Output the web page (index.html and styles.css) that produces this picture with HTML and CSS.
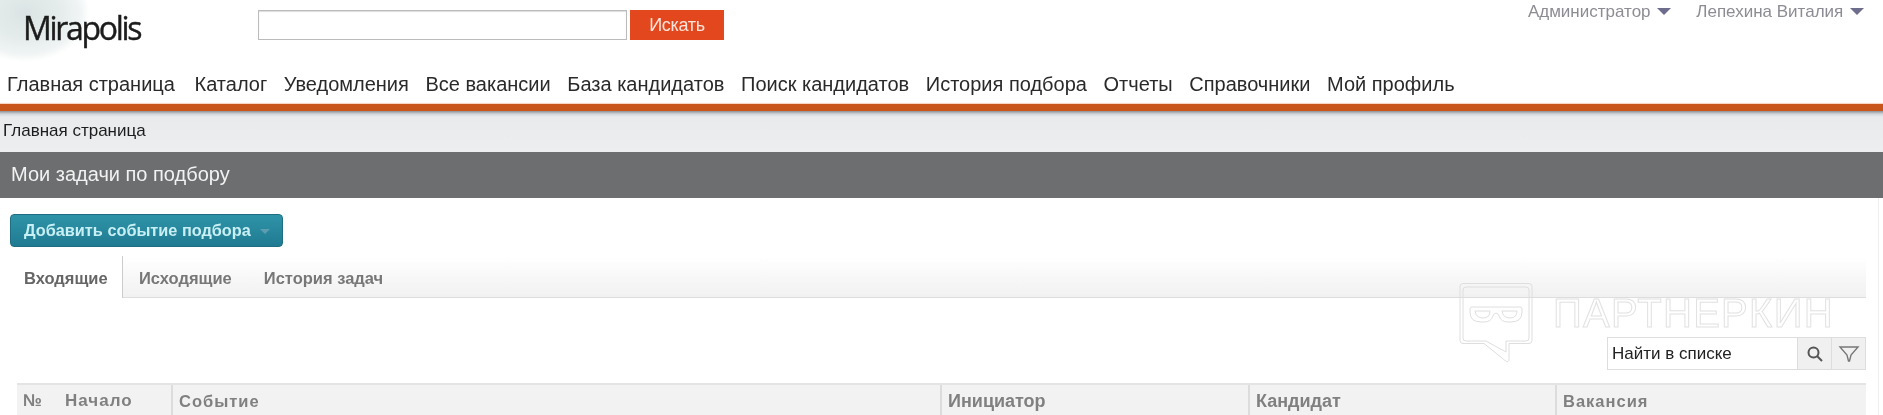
FILE: index.html
```html
<!DOCTYPE html>
<html lang="en">
<head>
    <meta charset="UTF-8">
    <title>Mirapolis</title>
    <link rel="stylesheet" href="styles.css">
</head>
<body>
    <div class="page">
        <header class="top-bar">
            <div class="logo"><span class="logo-blob"></span><span class="logo-text">Mirapolis</span></div>
            <div class="site-search">
                <input class="site-search-input" type="text">
                <button class="site-search-btn">Искать</button>
            </div>
            <div class="user-menu">
                <span class="user-item">Администратор <i class="caret"></i></span>
                <span class="user-item">Лепехина Виталия <i class="caret"></i></span>
            </div>
        </header>

        <nav class="main-nav">
            <a class="nav-home">Главная страница</a>
            <a>Каталог</a>
            <a>Уведомления</a>
            <a>Все вакансии</a>
            <a>База кандидатов</a>
            <a>Поиск кандидатов</a>
            <a>История подбора</a>
            <a>Отчеты</a>
            <a>Справочники</a>
            <a>Мой профиль</a>
        </nav>
        <div class="nav-line"></div>

        <div class="breadcrumb">Главная страница</div>
        <h1 class="page-title">Мои задачи по подбору</h1>

        <div class="content">
            <button class="add-btn">Добавить событие подбора <i class="add-caret"></i></button>

            <div class="tabs">
                <span class="tab tab-active">Входящие</span>
                <span class="tab">Исходящие</span>
                <span class="tab">История задач</span>
            </div>

            <div class="list-tools">
                <div class="list-search">
                    <span class="list-search-text">Найти в списке</span>
                    <span class="tool-btn">
                        <svg width="18" height="18" viewBox="0 0 18 18" fill="none" stroke="#555" stroke-width="2"><circle cx="7.5" cy="7.5" r="5"/><path d="M11 11l5 5"/></svg>
                    </span>
                    <span class="tool-btn">
                        <svg width="22" height="20" viewBox="0 0 22 20" fill="none" stroke="#777" stroke-width="1.4"><path d="M2 3h18l-7 8-1.5 6h-1L9 11z"/></svg>
                    </span>
                </div>
            </div>

            <div class="list-head">
                <div class="col col-first"><span class="col-num">№</span><span>Начало</span></div>
                <div class="col">Событие</div>
                <div class="col col-narrow">Инициатор</div>
                <div class="col col-narrow">Кандидат</div>
                <div class="col">Вакансия</div>
            </div>
        </div>

        <div class="watermark">
            <svg class="watermark-icon" width="74" height="80" viewBox="0 0 74 80" fill="none" stroke="#dedede" stroke-width="1">
                <path d="M4 .5h66q3 0 3 3v54q0 3-3 3H50v15q0 5-4 2L25 60.5H4q-3 0-3-3v-54q0-3 3-3z"/>
                <path d="M7 4h60q3 0 3 3v48q0 3-3 3H47v11L27 58H7q-3 0-3-3V7q0-3 3-3z"/>
                <path d="M13 24h48q2 0 2 2v3q0 10-11 10h-3q-7 0-9-6q-1-3-3-3t-3 3q-2 6-9 6h-3q-11 0-11-10v-3q0-2 2-2z"/>
                <path d="M16 28h15q0 7-7 7t-8-7zM43 28h15q0 7-7 7t-8-7z"/>
            </svg>
            <span class="watermark-text">ПАРТНЕРКИН</span>
        </div>

        <div class="scroll-edge"></div>
    </div>
</body>
</html>
```

FILE: styles.css
```css
html, body {
    margin: 0;
    height: 415px;
    overflow: hidden;
    background-color: #fff;
}
body {
    font-family: "Liberation Sans", Arial, sans-serif;
    color: #222;
}
.page {
    position: relative;
    height: 415px;
    overflow: hidden;
    filter: blur(0.45px);
}

/* top */
.top-bar {
    display: flex;
    height: 66px;
}
.logo {
    position: relative;
    width: 258px;
    flex: none;
}
.logo-blob {
    position: absolute;
    left: -40px;
    top: -36px;
    width: 130px;
    height: 98px;
    border-radius: 50%;
    background: radial-gradient(closest-side, #dbe4e4 0, #e4ebeb 50%, #eff3f3 82%, #fff 100%);
}
.logo-text {
    position: absolute;
    left: 23px;
    top: 6px;
    font-family: "Open Sans", sans-serif;
    font-size: 32px;
    letter-spacing: -2.3px;
    color: #1c1c1c;
    -webkit-text-stroke: 0.4px #1c1c1c;
}
.site-search {
    display: flex;
    gap: 3px;
    margin-top: 10px;
    height: 30px;
}
.site-search-input {
    width: 369px;
    height: 30px;
    box-sizing: border-box;
    border: 1px solid #bbb;
    box-shadow: inset 0 1px 1px #ddd;
    background-color: #fff;
    padding: 0;
}
.site-search-btn {
    width: 94px;
    border: 0;
    background-color: #e2471d;
    color: #fbe4dc;
    font-family: inherit;
    font-size: 18px;
    letter-spacing: -0.3px;
}
.user-menu {
    margin-left: auto;
    margin-right: 19px;
    display: flex;
    gap: 25px;
    font-size: 17px;
    color: #8c8c94;
    line-height: 24px;
}
.caret {
    display: inline-block;
    border-left: 7px solid transparent;
    border-right: 7px solid transparent;
    border-top: 7px solid #6f6d8d;
    margin-left: 2px;
    vertical-align: 2px;
}

/* nav */
.main-nav {
    display: flex;
    gap: 16.6px;
    height: 38px;
    padding-left: 7px;
    line-height: 37px;
    font-size: 20px;
    color: #2a2a2a;
}
.nav-home {
    margin-right: 3px;
}
.nav-line {
    height: 7px;
    background-color: #c9551a;
    box-shadow: 0 -1px 1px #f8d8c4;
}
.breadcrumb {
    height: 41px;
    padding: 10px 0 0 3px;
    box-sizing: border-box;
    font-size: 17px;
    line-height: 20px;
    color: #1d1d1d;
    background: linear-gradient(#8d9195 0, #d3d6d9 3px, #e8eaec 6px, #edeef0 100%);
}
.page-title {
    margin: 0;
    height: 46px;
    padding-left: 11px;
    line-height: 45px;
    font-size: 20px;
    font-weight: normal;
    color: #f2f2f2;
    background-color: #6d6e70;
}

/* content */
.content {
    padding: 16px 17px 0 10px;
}
.add-btn {
    display: block;
    width: 273px;
    height: 33px;
    padding: 0 0 0 13px;
    text-align: left;
    border: 1px solid #1f6d80;
    border-radius: 4px;
    background: linear-gradient(#2f93a8, #1f7b92);
    color: #c8f0f4;
    font-family: inherit;
    font-size: 16.3px;
    font-weight: bold;
}
.add-caret {
    display: inline-block;
    border-left: 5px solid transparent;
    border-right: 5px solid transparent;
    border-top: 5px solid #5c9db0;
    margin-left: 5px;
    vertical-align: 2px;
}
.tabs {
    display: flex;
    height: 41px;
    margin-top: 9px;
    background: linear-gradient(#fff, #f1f1f1);
    border-bottom: 1px solid #ddd;
    font-size: 16.5px;
    font-weight: bold;
    color: #777;
    line-height: 44px;
}
.tab {
    padding: 0 16px;
}
.tab-active {
    width: 84px;
    padding: 0 14px 0 14px;
    margin-bottom: -1px;
    background-color: #fff;
    border-right: 1px solid #ccc;
    color: #666;
}
.list-tools {
    display: flex;
    justify-content: flex-end;
    margin-top: 39px;
}
.list-search {
    display: flex;
    width: 259px;
    height: 33px;
    box-sizing: border-box;
    border: 1px solid #ddd;
    background-color: #fff;
}
.list-search-text {
    flex: 1;
    padding-left: 4px;
    font-size: 17px;
    line-height: 31px;
    color: #222;
}
.tool-btn {
    display: flex;
    align-items: center;
    justify-content: center;
    width: 33px;
    background-color: #f0f0f0;
    border-left: 1px solid #ddd;
}
.list-head {
    display: grid;
    grid-template-columns: 154px 769px 308px 307px 311px;
    height: 60px;
    margin: 13px 0 0 7px;
    border-top: 2px solid #e4e4e4;
    background-color: #f2f2f2;
    color: #808080;
    font-size: 16.5px;
    font-weight: bold;
    letter-spacing: 1px;
    line-height: 32px;
}
.col {
    padding-left: 6px;
    border-left: 2px solid #dcdcdc;
}
.col-first {
    display: flex;
    border-left: 0;
    font-size: 17px;
}
.col-num {
    width: 42px;
}
.col-narrow {
    font-size: 18px;
    letter-spacing: 0;
}

/* logo over the video */
.watermark {
    position: absolute;
    left: 1459px;
    top: 283px;
    display: flex;
    gap: 20px;
}
.watermark-text {
    font-size: 40px;
    line-height: 60px;
    letter-spacing: 1.3px;
    color: transparent;
    -webkit-text-stroke: 1px #e2e2e2;
}
.scroll-edge {
    position: absolute;
    top: 198px;
    right: 4px;
    bottom: 0;
    width: 1px;
    background-color: #eee;
}
```
